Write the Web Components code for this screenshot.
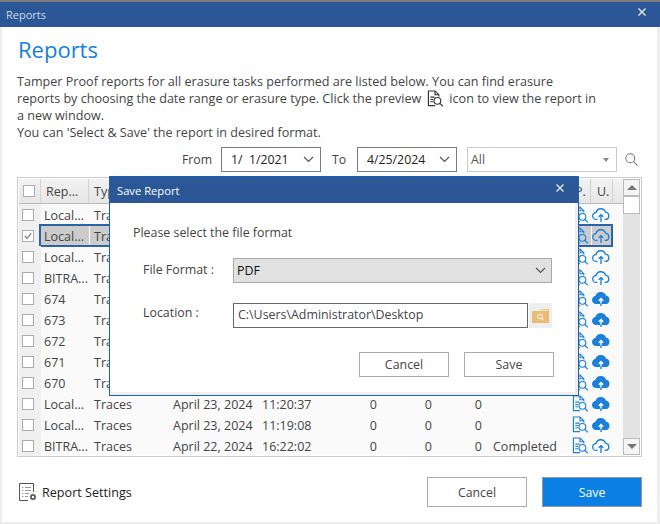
<!DOCTYPE html>
<html>
<head>
<meta charset="utf-8">
<style>
  html, body { margin: 0; padding: 0; background: #fff; }
  body { font-family: "Open Sans", "Liberation Sans", sans-serif; font-size: 12.3px; color: #444; }
</style>
</head>
<body>
<reports-window></reports-window>

<script>
const PREVIEW_PATHS = `
  <path d="M8.5 16.5H1.5V1H8.5L12.5 5V7M8.5 1V5H12.5" fill="none"/>
  <path d="M3.5 7.5H8M3.5 10H6.5M3.5 12.5H6.5" fill="none"/>
  <circle cx="11" cy="11.5" r="3.6" fill="none"/>
  <path d="M13.6 14.1 16.8 17.2" fill="none"/>`;
const CLOUD = "M6 14H4.8a3.9 3.9 0 0 1-.5-7.8A5.6 5.6 0 0 1 15 5.7a4.2 4.2 0 0 1 .4 8.3H14";

class PreviewIcon extends HTMLElement {
  constructor() {
    super();
    const color = this.getAttribute("color") || "#1b7fdc";
    this.attachShadow({ mode: "open" }).innerHTML = `
      <style>:host { display: inline-flex; } svg { display: block; }</style>
      <svg width="17" height="17" viewBox="0 0 18 18" stroke="${color}" stroke-width="1.2">${PREVIEW_PATHS}</svg>`;
  }
}

class CloudIcon extends HTMLElement {
  constructor() {
    super();
    const filled = this.hasAttribute("filled");
    this.attachShadow({ mode: "open" }).innerHTML = `
      <style>:host { display: inline-flex; } svg { display: block; }</style>
      <svg width="18" height="16" viewBox="0 0 20 18" fill="none" stroke="#1b7fdc" stroke-width="1.5">
        ${filled
          ? `<path d="${CLOUD}Z" fill="#1b7fdc"/>
             <path d="M10 17V14" stroke-width="1.6"/>
             <path d="M10 14V8.5M7.6 11 10 8.5 12.4 11" stroke="#fff" stroke-width="1.6"/>`
          : `<path d="${CLOUD}"/><path d="M10 17V8.5M7.4 11 10 8.5 12.6 11"/>`}
      </svg>`;
  }
}

class SmallChevron extends HTMLElement {
  constructor() {
    super();
    this.attachShadow({ mode: "open" }).innerHTML = `
      <style>:host { display: inline-flex; } svg { display: block; }</style>
      <svg width="11" height="7" viewBox="0 0 11 7" fill="none" stroke="#555" stroke-width="1.2"><path d="M1 1 5.5 5.5 10 1"/></svg>`;
  }
}

class CheckMark extends HTMLElement {
  constructor() {
    super();
    const on = this.hasAttribute("checked");
    this.attachShadow({ mode: "open" }).innerHTML = `
      <style>
        :host { display: block; width: 10px; height: 10px; border: 1px solid #ababab; background: #fff; }
        svg { display: block; }
      </style>
      ${on ? `<svg width="10" height="10" viewBox="0 0 11 11" fill="none" stroke="#777" stroke-width="1.3"><path d="M2 5.5 4.5 8 9 2.5"/></svg>` : ""}`;
  }
}

// date picker and plain combo look different, the variant attribute picks which
class DropBox extends HTMLElement {
  constructor() {
    super();
    this.attachShadow({ mode: "open" }).innerHTML = `
      <style>
        :host { display: flex; align-items: center; box-sizing: border-box; height: 25px; border: 1px solid #7a7a7a; padding: 0 6px 0 9px; color: #222; background: #fff; }
        :host([variant="combo"]) { border-color: #ccc; color: #555; padding: 0 7px 0 3px; }
        :host([variant="format"]) { border-color: #a9a9a9; background: #e1e1e1; color: #111; padding: 0 5px 0 3px; }
        .text { flex: 1; white-space: pre; }
        .tri { width: 0; height: 0; border-left: 3.5px solid transparent; border-right: 3.5px solid transparent; border-top: 4px solid #888; }
      </style>
      <span class="text"><slot></slot></span>
      ${this.getAttribute("variant") === "combo" ? `<span class="tri"></span>` : `<small-chevron></small-chevron>`}`;
  }
}

class PushButton extends HTMLElement {
  constructor() {
    super();
    this.attachShadow({ mode: "open" }).innerHTML = `
      <style>
        :host { display: flex; align-items: center; justify-content: center; box-sizing: border-box; width: 90px; height: 25px; border: 1px solid #ababab; background: #fff; color: #444; }
        :host([big]) { width: 100px; height: 30px; }
        :host([primary]) { background: #0b7fe3; color: #fff; border-color: #999; }
      </style>
      <slot></slot>`;
  }
}

class ReportRow extends HTMLElement {
  constructor() {
    super();
    const a = (n) => this.getAttribute(n) || "";
    this.attachShadow({ mode: "open" }).innerHTML = `
      <style>
        :host { display: grid; grid-template-columns: 22px 48px 80px 89px 77px 45px 55px 50px 85px 21px 22px; width: 594px; height: 21px; align-items: center; white-space: nowrap; color: #444; position: relative; font-size: 12.5px; }
        .chk { background: #f0f0f0; align-self: stretch; display: flex; align-items: center; padding-left: 3px; }
        .t { padding: 1px 0 0 4px; overflow: hidden; }
        .name { padding-left: 3px; }
        .n { text-align: right; padding: 1px 3px 0 0; }
        .s { padding: 1px 0 0 8px; }
        .i { display: flex; justify-content: center; }
        .up { padding-right: 3px; }
        :host([selected]) .sel { background: #ccc; align-self: stretch; display: flex; align-items: center; }
        :host([selected]) .i.sel { justify-content: center; }
        :host([selected])::after { content: ""; position: absolute; left: 20px; right: 0; top: -1px; bottom: -1px; border: 2px solid #2b62a8; pointer-events: none; }
      </style>
      <div class="chk"><check-mark ${this.hasAttribute("selected") ? "checked" : ""}></check-mark></div>
      <div class="t name sel">${a("name")}</div>
      <div class="t sel" style="margin-left:1px">Traces</div>
      <div class="t">${a("date")}</div>
      <div class="t">${a("time")}</div>
      <div class="n">${a("date") ? "0" : ""}</div>
      <div class="n">${a("date") ? "0" : ""}</div>
      <div class="n">${a("date") ? "0" : ""}</div>
      <div class="s">${a("status")}</div>
      <div class="i sel"><preview-icon></preview-icon></div>
      <div class="i up sel" style="margin-left:1px"><cloud-icon ${this.hasAttribute("filled") ? "filled" : ""}></cloud-icon></div>`;
  }
}

class ReportTable extends HTMLElement {
  constructor() {
    super();
    this.attachShadow({ mode: "open" }).innerHTML = `
      <style>
        :host { display: flex; box-sizing: border-box; width: 625px; height: 280px; border: 1px solid #ccc; padding: 1px; background: #fff; }
        .main { width: 604px; flex: none; background: #fafafa; }
        .head { display: grid; grid-template-columns: 22px 48px 80px 89px 77px 45px 55px 50px 85px 21px 22px 10px; height: 24px; background: linear-gradient(#f2f2f2, #e6e6e6); border-bottom: 1px solid #bbb; align-items: center; color: #444; white-space: nowrap; font-size: 12.5px; }
        .head div { height: 100%; display: flex; align-items: center; box-sizing: border-box; border-right: 1px solid #d2d2d2; padding-left: 5px; }
        .head .c { padding-left: 4px; }
        .head .u { padding-left: 6px; }
        .scroll { flex: none; width: 17px; background: #e3e3e3; display: flex; flex-direction: column; }
        .btn { box-sizing: border-box; height: 17px; background: #f4f4f4; border: 1px solid #bbb; display: flex; align-items: center; justify-content: center; }
        .thumb { box-sizing: border-box; height: 18px; background: #fff; border: 1px solid #bbb; }
        .up { width: 0; height: 0; border-left: 5px solid transparent; border-right: 5px solid transparent; border-bottom: 5px solid #777; }
        .down { width: 0; height: 0; border-left: 5px solid transparent; border-right: 5px solid transparent; border-top: 5px solid #777; }
        .gap { flex: 1; }
      </style>
      <div class="main">
        <div class="head">
          <div class="c"><check-mark></check-mark></div>
          <div>Rep...</div><div>Typ</div><div></div><div></div><div></div><div></div><div></div><div></div>
          <div>P.</div><div class="u">U.</div><div style="border:0"></div>
        </div>
        <slot></slot>
      </div>
      <div class="scroll">
        <div class="btn"><span class="up"></span></div>
        <div class="thumb"></div>
        <div class="gap"></div>
        <div class="btn"><span class="down"></span></div>
      </div>`;
  }
}

class SaveDialog extends HTMLElement {
  constructor() {
    super();
    this.attachShadow({ mode: "open" }).innerHTML = `
      <style>
        :host { position: absolute; left: 109px; top: 174px; width: 470px; height: 220px; box-sizing: border-box; border: 1px solid #1a62b5; background: #eee; padding: 0 3px 3px 0; color: #444; display: block; font-size: 12.4px; }
        .title { height: 26px; background: #2b5797; color: #fff; display: flex; align-items: center; justify-content: space-between; padding: 0 14px 0 7px; font-size: 11.2px; margin-right: -3px; }
        .title x-glyph { margin-top: -5px; }
        .body { background: #fff; height: 189px; box-sizing: border-box; padding: 21px 0 0 23px; }
        .lead { height: 17px; line-height: 17px; }
        .field { display: grid; grid-template-columns: 90px 319px; margin: 0 0 0 10px; align-items: start; }
        .f1 { margin-top: 17px; }
        .f2 { margin-top: 20px; }
        .f1 .lbl { line-height: 23px; }
        .lbl { line-height: 19px; }
        .loc { display: flex; }
        .path { flex: none; width: 295px; height: 25px; box-sizing: border-box; border: 1px solid #666; padding: 0 4px 2px; display: flex; align-items: center; }
        .browse { flex: 1; margin-left: 1px; background: #eee; display: flex; align-items: center; justify-content: center; }
        .foot { display: flex; justify-content: flex-end; gap: 15px; padding-right: 21px; margin-top: 24px; }
      </style>
      <div class="title"><span>Save Report</span><x-glyph></x-glyph></div>
      <div class="body">
        <div class="lead">Please select the file format</div>
        <div class="field f1"><span class="lbl">File Format :</span><drop-box variant="format">PDF</drop-box></div>
        <div class="field f2"><span class="lbl">Location :</span>
          <div class="loc">
            <div class="path">C:\\Users\\Administrator\\Desktop</div>
            <div class="browse">
              <svg width="17" height="14" viewBox="0 0 17 14">
                <path d="M0 2H8L9.5 0H17V14H0Z" fill="#e9bc74"/>
                <path d="M9.5 1.2H16" stroke="#fff" stroke-width=".8"/>
                <circle cx="8" cy="7.5" r="2.4" fill="none" stroke="#fff" stroke-width="1"/>
                <path d="M9.8 9.3 12 11.3" stroke="#fff" stroke-width="1"/>
              </svg>
            </div>
          </div>
        </div>
        <div class="foot"><push-button>Cancel</push-button><push-button>Save</push-button></div>
      </div>`;
  }
}

class XGlyph extends HTMLElement {
  constructor() {
    super();
    this.attachShadow({ mode: "open" }).innerHTML = `
      <style>:host { display: inline-flex; } svg { display: block; }</style>
      <svg width="8" height="8" viewBox="0 0 8 8" stroke="#e4ebf5" stroke-width="1.4"><path d="M.5.5 7.5 7.5M7.5.5.5 7.5"/></svg>`;
  }
}

const ROWS = [
  { name: "Local..." },
  { name: "Local...", selected: true },
  { name: "Local..." },
  { name: "BITRA..." },
  { name: "674", filled: true },
  { name: "673", filled: true },
  { name: "672", filled: true },
  { name: "671", filled: true },
  { name: "670", filled: true },
  { name: "Local...", date: "April 23, 2024", time: "11:20:37", filled: true },
  { name: "Local...", date: "April 23, 2024", time: "11:19:08", filled: true },
  { name: "BITRA...", date: "April 22, 2024", time: "16:22:02", status: "Completed" },
];

class ReportsWindow extends HTMLElement {
  constructor() {
    super();
    const rows = ROWS.map(r => `<report-row name="${r.name}" date="${r.date || ""}" time="${r.time || ""}" status="${r.status || ""}" ${r.selected ? "selected" : ""} ${r.filled ? "filled" : ""}></report-row>`).join("");
    this.attachShadow({ mode: "open" }).innerHTML = `
      <style>
        :host { display: block; position: relative; width: 660px; height: 524px; box-sizing: border-box; background: #eee; border-top: 2px solid #7c7c7c; overflow: hidden; }
        .bar { height: 25px; background: #2b5797; color: #cfd8e8; display: flex; align-items: center; justify-content: space-between; padding: 0 14px 0 6px; font-size: 11px; }
        .bar x-glyph { margin-top: -6px; }
        .content { margin: 0 3px 2px 2px; height: 495px; box-sizing: border-box; background: #fff; padding: 6px 15px 0 15px; }
        h1 { margin: 0 0 0 1px; font-weight: 400; font-size: 22px; line-height: 32px; color: #127fe0; height: 34px; }
        .desc { margin: 6px 0 0 0; line-height: 17px; height: 68px; white-space: nowrap; font-size: 12.6px; }
        .desc preview-icon { vertical-align: -4px; margin: 0 5px 0 6px; }
        .filters { display: flex; align-items: center; height: 25px; margin: 6px 0 0 165px; }
        .lab { color: #444; }
        .from { width: 39px; }
        .to { width: 25px; margin-left: 11px; }
        drop-box.date { width: 100px; }
        drop-box.all { width: 150px; margin-left: 10px; }
        .find { margin-left: 8px; display: flex; }
        report-table { margin-top: 5px; }
        .bottom { display: flex; align-items: center; margin-top: 20px; height: 30px; color: #222; }
        .rs { display: flex; align-items: center; gap: 4px; flex: 1; padding-left: 2px; font-size: 12.6px; }
        .bottom push-button + push-button { margin-left: 15px; }
      </style>
      <div class="bar"><span>Reports</span><x-glyph></x-glyph></div>
      <div class="content">
        <h1>Reports</h1>
        <div class="desc">Tamper Proof reports for all erasure tasks performed are listed below. You can find erasure<br>reports by choosing the date range or erasure type. Click the preview<preview-icon color="#333"></preview-icon>icon to view the report in<br>a new window.<br>You can 'Select &amp; Save' the report in desired format.</div>
        <div class="filters">
          <span class="lab from">From</span>
          <drop-box class="date">1/  1/2021</drop-box>
          <span class="lab to">To</span>
          <drop-box class="date">4/25/2024</drop-box>
          <drop-box class="all" variant="combo">All</drop-box>
          <span class="find">
            <svg width="13" height="13" viewBox="0 0 14 14" fill="none" stroke="#777" stroke-width="1.1"><circle cx="5.7" cy="5.7" r="4.8"/><path d="M9.2 9.2 13.3 13.3"/></svg>
          </span>
        </div>
        <report-table>${rows}</report-table>
        <div class="bottom">
          <div class="rs">
            <svg width="19" height="19" viewBox="0 0 19 19" fill="none" stroke="#555" stroke-width="1">
              <path d="M9 17.5H.5V.5H14.5V9"/>
              <path d="M3 4.5H4.5M6 4.5H12M3 7.5H4.5M6 7.5H12M3 10.5H4.5M6 10.5H10M3 13.5H4.5M6 13.5H9" stroke="#999"/>
              <circle cx="14" cy="14" r="2" stroke="#555" stroke-width="1.6"/>
              <path d="M14 10.8V11.6M14 16.4V17.2M10.8 14H11.6M16.4 14H17.2M11.7 11.7 12.3 12.3M15.7 15.7 16.3 16.3M16.3 11.7 15.7 12.3M12.3 15.7 11.7 16.3" stroke="#555" stroke-width="1.2"/>
            </svg>
            <span>Report Settings</span>
          </div>
          <push-button big>Cancel</push-button>
          <push-button big primary>Save</push-button>
        </div>
      </div>
      <save-dialog></save-dialog>`;
  }
}

customElements.define("preview-icon", PreviewIcon);
customElements.define("cloud-icon", CloudIcon);
customElements.define("small-chevron", SmallChevron);
customElements.define("check-mark", CheckMark);
customElements.define("x-glyph", XGlyph);
customElements.define("drop-box", DropBox);
customElements.define("push-button", PushButton);
customElements.define("report-row", ReportRow);
customElements.define("report-table", ReportTable);
customElements.define("save-dialog", SaveDialog);
customElements.define("reports-window", ReportsWindow);
</script>
</body>
</html>
